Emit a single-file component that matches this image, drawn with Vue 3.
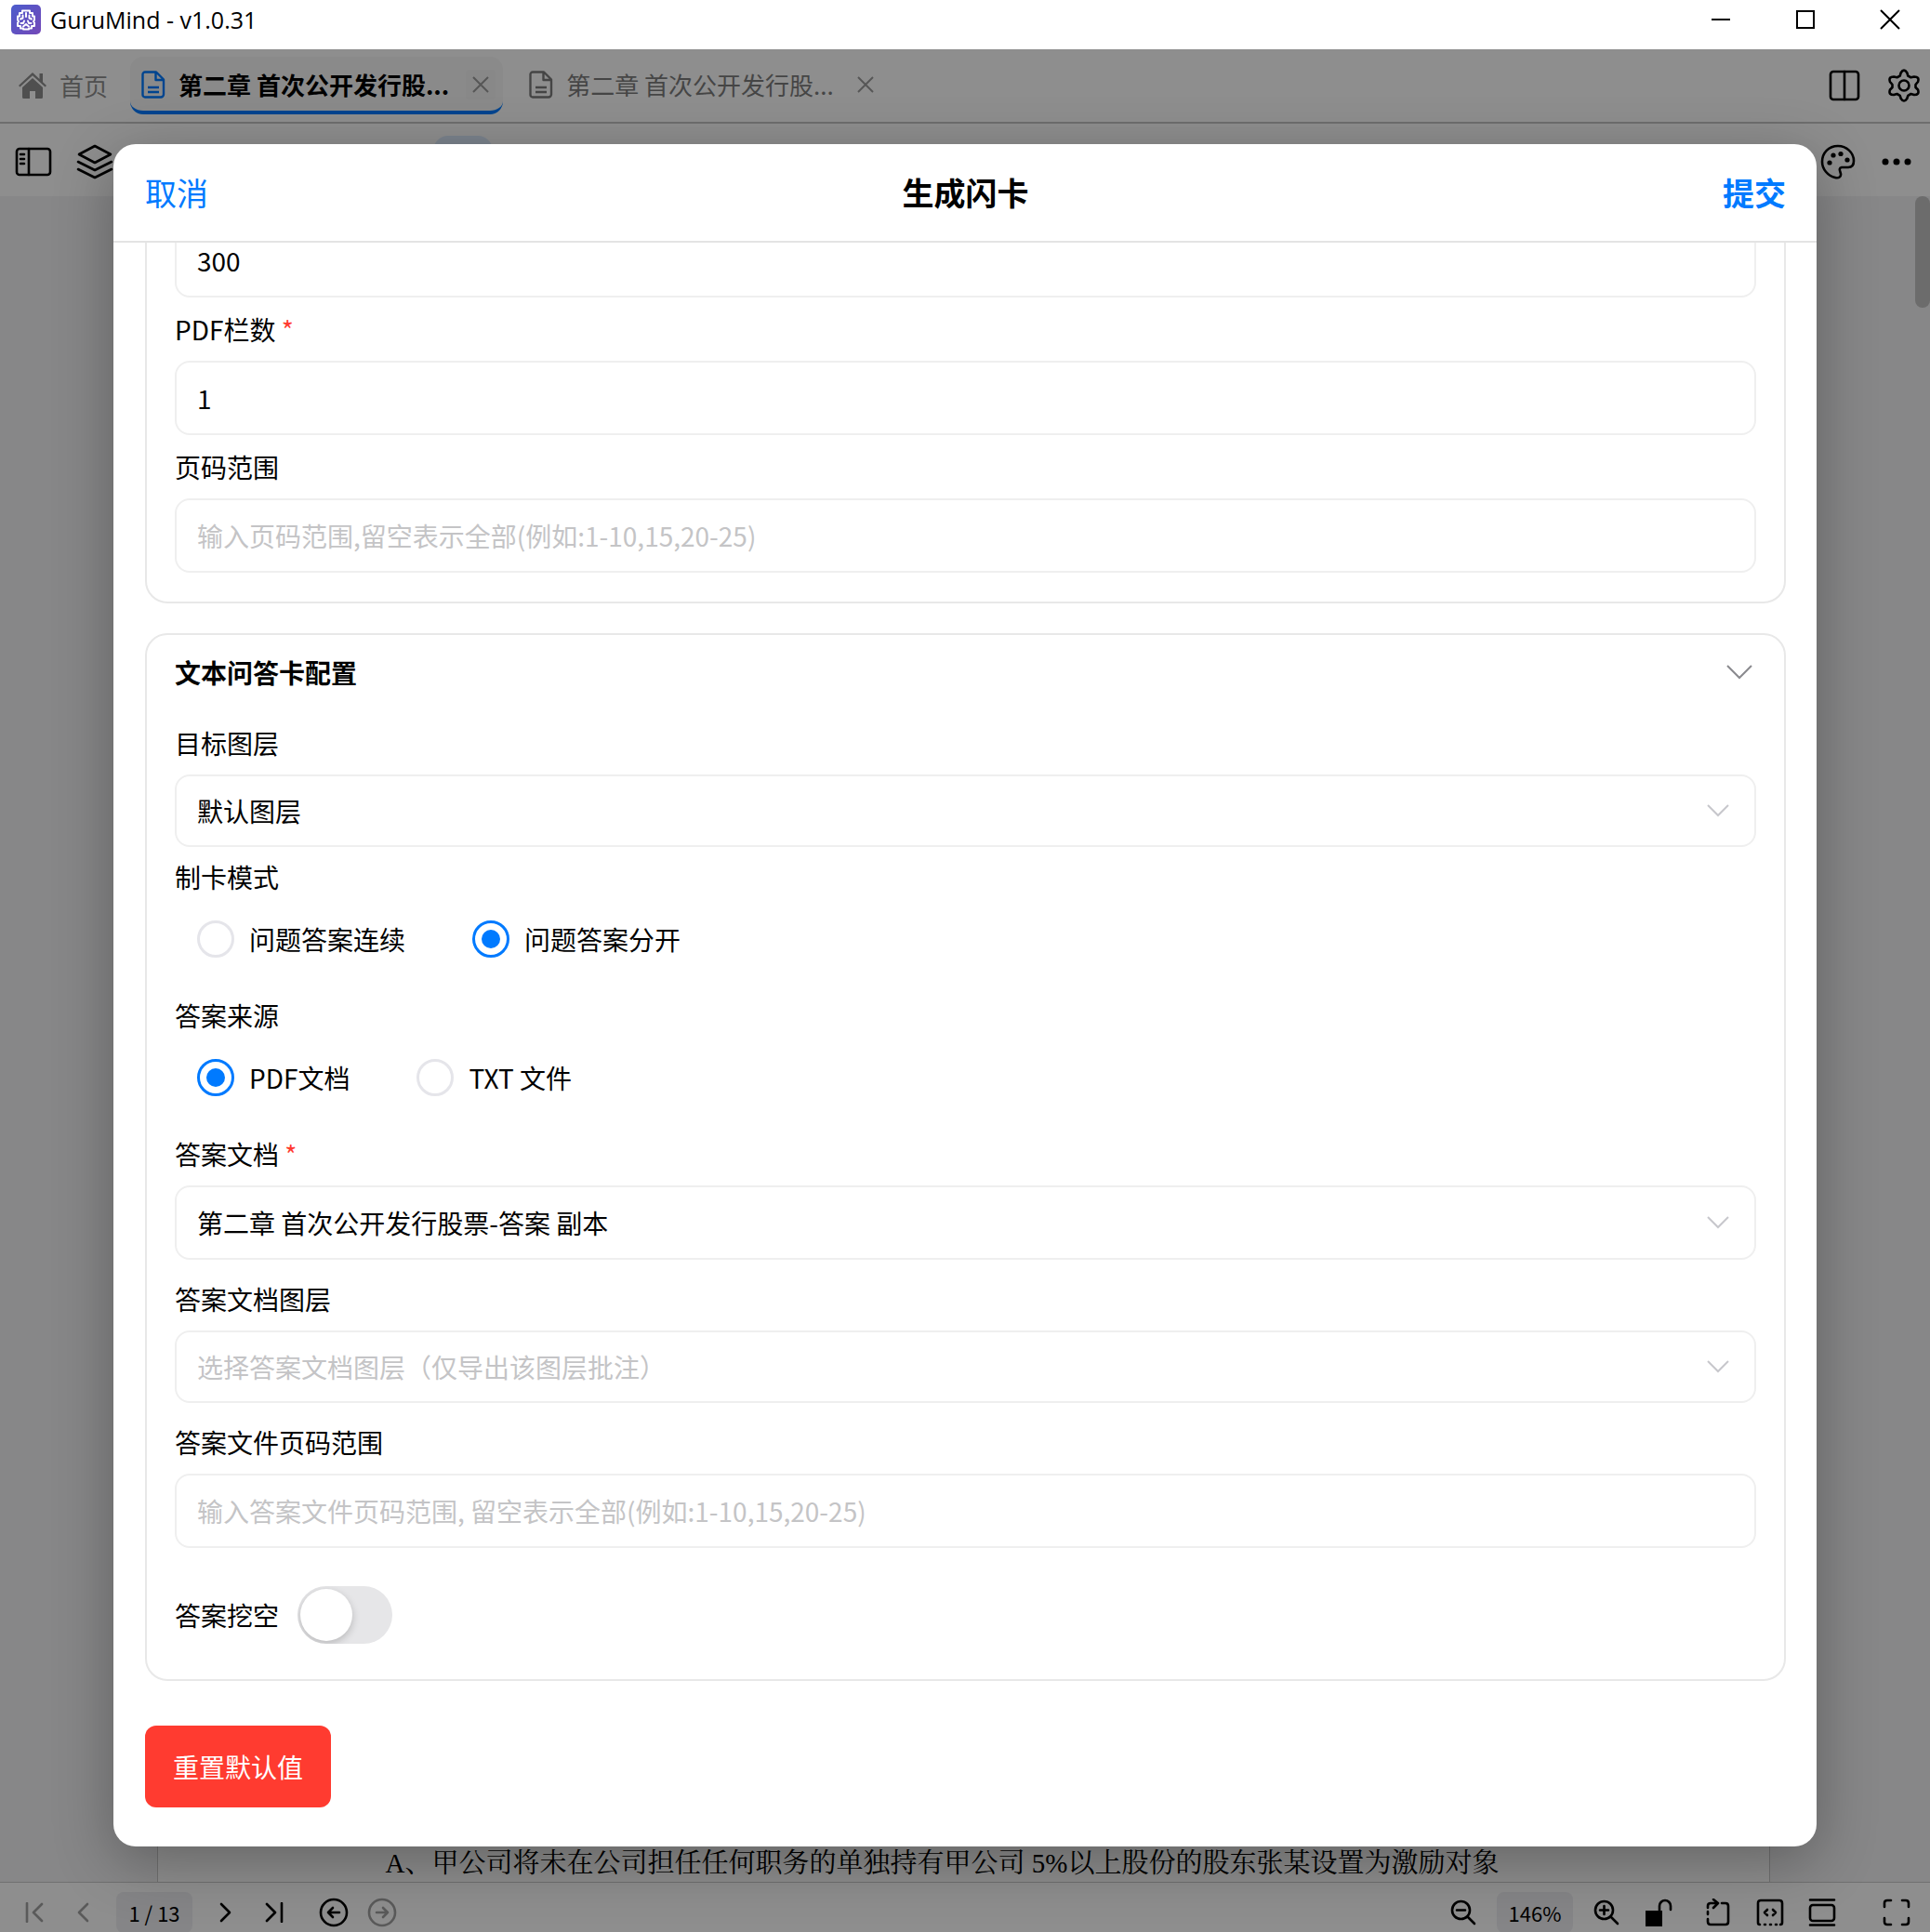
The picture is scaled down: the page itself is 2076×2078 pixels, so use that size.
<script setup>
import { ref } from 'vue'

const dpi = ref('300')
const columns = ref('1')
const pageRange = ref('')
const layer = ref('default')
const mode = ref('split')
const source = ref('pdf')
const answerDoc = ref('ch2')
const answerLayer = ref('')
const answerRange = ref('')
const cloze = ref(false)

const modes = [
  { value: 'continuous', label: '问题答案连续' },
  { value: 'split', label: '问题答案分开' },
]
const sources = [
  { value: 'pdf', label: 'PDF文档' },
  { value: 'txt', label: 'TXT 文件' },
]
</script>

<template>
  <div class="window">
    <header class="titlebar">
      <svg class="logo" width="32" height="32" viewBox="0 0 32 32" aria-hidden="true">
        <defs>
          <linearGradient id="lg" x1="0" y1="0" x2="1" y2="1">
            <stop offset="0" stop-color="#4b5ccc" />
            <stop offset="1" stop-color="#7448b8" />
          </linearGradient>
        </defs>
        <rect width="32" height="32" rx="5" fill="url(#lg)" />
        <g fill="none" stroke="#fff" stroke-width="2" stroke-linecap="round" stroke-linejoin="round">
          <path d="M12 6.500h8v2.500h3v3.500h2v4l-1 1.500 1 1.500v3.500h-3v2.500h-3v1h-6v-1h-3v-2.500H7v-3.500L8 18l-1-1.500v-4h2V9h3z" />
          <path d="M16 9v4M12.500 11.500v3l-2.500 1M19.500 11.500v3l2.500 1M10.500 20h2.500l1-2.500M21.500 20H19l-1-2.500M13 23.500l3-2.500 3 2.500" />
        </g>
      </svg>
      <span class="app-name">GuruMind - v1.0.31</span>
      <div class="window-buttons">
        <button type="button" aria-label="最小化">
          <svg width="22" height="22" viewBox="0 0 22 22"><path d="M1 11h20" class="win" /></svg>
        </button>
        <button type="button" aria-label="最大化">
          <svg width="22" height="22" viewBox="0 0 22 22"><path d="M2 2h18v18H2z" class="win" /></svg>
        </button>
        <button type="button" aria-label="关闭">
          <svg width="22" height="22" viewBox="0 0 22 22"><path d="M1 1l20 20M21 1L1 21" class="win" /></svg>
        </button>
      </div>
    </header>

    <div class="app">
      <nav class="tabs">
        <a class="home" href="#home">
          <svg width="30" height="30" viewBox="0 0 30 30" fill="currentColor">
            <path d="M15 1 0 15l1.500 1.500L15 4.200l13.500 12.300L30 15l-4-3.700V2h-3.500v6z" />
            <path d="M15 7 4 17v10.500A1.500 1.500 0 0 0 5.500 29H12v-8h6v8h6.500a1.500 1.500 0 0 0 1.500-1.500V17z" />
          </svg>
          <span>首页</span>
        </a>
        <div class="tab active">
          <svg class="file" width="26" height="30" viewBox="0 0 26 30">
            <path d="M4 1.500h12l8 8v16a3 3 0 0 1-3 3H4a2.500 2.500 0 0 1-2.500-2.500V4A2.500 2.500 0 0 1 4 1.500zM15.500 2v8H24M7 18h12M7 23h12" />
          </svg>
          <span class="tab-name">第二章 首次公开发行股...</span>
          <button class="tab-close" type="button" aria-label="关闭标签">
            <svg width="18" height="18" viewBox="0 0 18 18"><path d="M1 1l16 16M17 1L1 17" /></svg>
          </button>
        </div>
        <div class="tab">
          <svg class="file" width="26" height="30" viewBox="0 0 26 30">
            <path d="M4 1.500h12l8 8v16a3 3 0 0 1-3 3H4a2.500 2.500 0 0 1-2.500-2.500V4A2.500 2.500 0 0 1 4 1.500zM15.500 2v8H24M7 18h12M7 23h12" />
          </svg>
          <span class="tab-name">第二章 首次公开发行股...</span>
          <button class="tab-close" type="button" aria-label="关闭标签">
            <svg width="18" height="18" viewBox="0 0 18 18"><path d="M1 1l16 16M17 1L1 17" /></svg>
          </button>
        </div>
        <div class="right-tools">
          <button type="button" aria-label="分屏">
            <svg class="line" width="36" height="36" viewBox="0 0 36 36">
              <rect x="3" y="3" width="30" height="30" rx="3" />
              <path d="M18 3v30" />
            </svg>
          </button>
          <button type="button" aria-label="设置">
            <svg class="line" width="36" height="36" viewBox="0 0 36 36">
              <circle cx="18" cy="18" r="5.500" />
              <path d="M14.700 4.200Q18-1 21.300 4.200L22.300 7.500 25.500 9.300 29 8.500Q35 8.500 33 14L30.500 17v3L33 22.500Q35 28 29 28L25.500 27 22.300 28.800 21.300 32Q18 37 14.700 32L13.700 28.800 10.500 27 7 28Q1 28 3 22.500L5.500 20v-3L3 14Q1 8.500 7 8.500L10.500 9.300 13.700 7.500z" />
            </svg>
          </button>
        </div>
      </nav>

      <div class="toolbar">
        <button type="button" aria-label="侧边栏">
          <svg class="line" width="40" height="36" viewBox="0 0 40 36">
            <rect x="2" y="4" width="36" height="28" rx="3" />
            <path d="M15 4v28M6 10h4M6 15h4M6 20h4" />
          </svg>
        </button>
        <button type="button" aria-label="图层">
          <svg class="line" width="40" height="38" viewBox="0 0 40 38">
            <path d="M20 2 37 11 20 20 3 11zM2 19l18 9 18-9M2 27l18 9 18-9" />
          </svg>
        </button>
        <span class="active-tool"></span>
        <div class="right-tools">
          <button type="button" aria-label="主题">
            <svg class="line" width="38" height="38" viewBox="0 0 38 38">
              <path d="M19 2C9 2 2 9.500 2 19c0 8 6 15 14 17 4 1 6.500-1 6-4-.5-3-3-6 1-7h7c4 0 6-2.500 6-7C36 9 28 2 19 2z" />
              <g fill="#000" stroke="none">
                <circle cx="10" cy="20" r="2.600" /><circle cx="14" cy="12" r="2.600" />
                <circle cx="22" cy="10.500" r="2.600" /><circle cx="29" cy="17" r="2.600" />
              </g>
            </svg>
          </button>
          <button type="button" aria-label="更多">
            <svg width="32" height="8" viewBox="0 0 32 8">
              <circle cx="4" cy="4" r="3.500" /><circle cx="16" cy="4" r="3.500" /><circle cx="28" cy="4" r="3.500" />
            </svg>
          </button>
        </div>
      </div>

      <main class="viewer">
        <div class="page">
          <p>A、甲公司将未在公司担任任何职务的单独持有甲公司 5%以上股份的股东张某设置为激励对象</p>
        </div>
        <span class="scroll-thumb"></span>
      </main>

      <footer class="status">
        <button type="button" disabled aria-label="第一页">
          <svg class="line" width="20" height="22" viewBox="0 0 20 22"><path d="M2 1v20M18 2l-9 9 9 9" /></svg>
        </button>
        <button type="button" disabled aria-label="上一页">
          <svg class="line" width="20" height="22" viewBox="0 0 20 22"><path d="M15 2l-9 9 9 9" /></svg>
        </button>
        <span class="pill">1 / 13</span>
        <button type="button" aria-label="下一页">
          <svg class="line" width="20" height="22" viewBox="0 0 20 22"><path d="M5 2l9 9-9 9" /></svg>
        </button>
        <button type="button" aria-label="最后一页">
          <svg class="line" width="20" height="22" viewBox="0 0 20 22"><path d="M2 2l9 9-9 9M18 1v20" /></svg>
        </button>
        <button class="back" type="button" aria-label="后退">
          <svg class="line" width="32" height="32" viewBox="0 0 32 32"><circle cx="16" cy="16" r="14" /><path d="M22 16H10M15 11l-5 5 5 5" /></svg>
        </button>
        <button type="button" disabled aria-label="前进">
          <svg class="line" width="32" height="32" viewBox="0 0 32 32"><circle cx="16" cy="16" r="14" /><path d="M10 16h12M17 11l5 5-5 5" /></svg>
        </button>
        <div class="status-right">
          <button type="button" aria-label="缩小">
            <svg class="line" width="28" height="28" viewBox="0 0 28 28"><circle cx="11.500" cy="11.500" r="9.500" /><path d="M7 11.500h9M18.500 18.500l7.500 7.500" /></svg>
          </button>
          <span class="pill">146%</span>
          <button type="button" aria-label="放大">
            <svg class="line" width="28" height="28" viewBox="0 0 28 28"><circle cx="11.500" cy="11.500" r="9.500" /><path d="M7 11.500h9M11.500 7v9M18.500 18.500l7.500 7.500" /></svg>
          </button>
          <button type="button" aria-label="解锁">
            <svg class="line" width="30" height="30" viewBox="0 0 30 30"><path d="M1 13h18v17H1z" fill="#000" stroke="none" /><path d="M16 13V8a6 6 0 0 1 12 0v4" /></svg>
          </button>
          <button class="rotate" type="button" aria-label="旋转">
            <svg class="line" width="28" height="30" viewBox="0 0 28 30"><path d="M18 5h4q3 0 3 3v17q0 3-3 3H6q-3 0-3-3v-3M3 17v-3M3 10V8q0-3 3-3h6M9 1l5 4-5 5" /></svg>
          </button>
          <button type="button" aria-label="适合宽度">
            <svg class="line" width="30" height="30" viewBox="0 0 30 30"><path d="M4 28q-2 0-2-2V5q0-3 3-3h20q3 0 3 3v21q0 2-2 2M9 28h1M15 28h1M21 28h1M12 12l-3 3 3 3M18 12l3 3-3 3" /></svg>
          </button>
          <button type="button" aria-label="适合页面">
            <svg class="line" width="30" height="30" viewBox="0 0 30 30"><path d="M2 1.500h26M2 28.500h26" /><rect x="2" y="7" width="26" height="17" rx="3" /></svg>
          </button>
          <button class="full" type="button" aria-label="全屏">
            <svg class="line" width="30" height="30" viewBox="0 0 30 30"><path d="M2 9V5q0-3 3-3h4M21 2h4q3 0 3 3v4M28 21v4q0 3-3 3h-4M9 28H5q-3 0-3-3v-4" /></svg>
          </button>
        </div>
      </footer>

      <div class="overlay">
        <form class="modal" role="dialog" aria-labelledby="dialog-title" @submit.prevent>
          <div class="modal-head">
            <button class="cancel" type="button">取消</button>
            <h1 id="dialog-title">生成闪卡</h1>
            <button class="submit" type="submit">提交</button>
          </div>

          <div class="modal-body">
            <section class="card scrolled">
              <input v-model="dpi" class="control" type="text" aria-label="DPI" />
              <div class="field">
                <label for="columns">PDF栏数 <span class="req">*</span></label>
                <input id="columns" v-model="columns" class="control" type="text" />
              </div>
              <div class="field">
                <label for="range">页码范围</label>
                <input id="range" v-model="pageRange" class="control" type="text" placeholder="输入页码范围,留空表示全部(例如:1-10,15,20-25)" />
              </div>
            </section>

            <section class="card config">
              <div class="card-head">
                <h2>文本问答卡配置</h2>
                <button type="button" aria-label="折叠">
                  <svg width="28" height="16" viewBox="0 0 28 16"><path d="M1 1l13 13L27 1" /></svg>
                </button>
              </div>

              <div>
                <label for="layer">目标图层</label>
                <div class="select">
                  <select id="layer" v-model="layer" class="control short">
                    <option value="default">默认图层</option>
                  </select>
                  <svg width="24" height="14" viewBox="0 0 24 14"><path d="M1 1l11 11L23 1" /></svg>
                </div>
              </div>

              <fieldset class="after-select">
                <legend>制卡模式</legend>
                <div class="radios">
                  <label v-for="m in modes" :key="m.value">
                    <input v-model="mode" type="radio" name="mode" :value="m.value" />{{ m.label }}
                  </label>
                </div>
              </fieldset>

              <fieldset>
                <legend>答案来源</legend>
                <div class="radios">
                  <label v-for="s in sources" :key="s.value">
                    <input v-model="source" type="radio" name="source" :value="s.value" />{{ s.label }}
                  </label>
                </div>
              </fieldset>

              <div>
                <label for="answer-doc">答案文档 <span class="req">*</span></label>
                <div class="select">
                  <select id="answer-doc" v-model="answerDoc" class="control">
                    <option value="ch2">第二章 首次公开发行股票-答案 副本</option>
                  </select>
                  <svg width="24" height="14" viewBox="0 0 24 14"><path d="M1 1l11 11L23 1" /></svg>
                </div>
              </div>

              <div class="field wide">
                <label for="answer-layer">答案文档图层</label>
                <div class="select">
                  <select id="answer-layer" v-model="answerLayer" class="control short empty">
                    <option value="">选择答案文档图层（仅导出该图层批注）</option>
                  </select>
                  <svg width="24" height="14" viewBox="0 0 24 14"><path d="M1 1l11 11L23 1" /></svg>
                </div>
              </div>

              <div class="field wide">
                <label for="answer-range">答案文件页码范围</label>
                <input id="answer-range" v-model="answerRange" class="control" type="text" placeholder="输入答案文件页码范围, 留空表示全部(例如:1-10,15,20-25)" />
              </div>

              <div class="switch-row">
                <label for="cloze">答案挖空</label>
                <input id="cloze" v-model="cloze" class="switch" type="checkbox" role="switch" />
              </div>
            </section>

            <button class="reset" type="button">重置默认值</button>
          </div>
        </form>
      </div>
    </div>
  </div>
</template>

<style>
body {
  margin: 0;
}
</style>

<style scoped>
* {
  box-sizing: border-box;
}
.window {
  display: flex;
  flex-direction: column;
  min-height: 100vh;
  color: #000;
  font: 28px/40px "Noto Sans CJK SC", "Noto Sans", sans-serif;
}
button,
input,
select {
  margin: 0;
  padding: 0;
  border: 0;
  background: none;
  color: inherit;
  font: inherit;
}
h1,
h2,
p {
  margin: 0;
}
svg {
  display: block;
}

/* Title bar */
.titlebar {
  display: flex;
  align-items: center;
  height: 53px;
  padding: 0 0 11px 12px;
  background: #fff;
}
.app-name {
  margin-left: 10px;
  font: 25px/40px "Open Sans", "Noto Sans", sans-serif;
}
.window-buttons {
  display: flex;
  gap: 5px;
  margin-left: auto;
}
.window-buttons button {
  display: grid;
  place-items: center;
  width: 86px;
  height: 42px;
}
.win {
  fill: none;
  stroke: #000;
  stroke-width: 2;
}

/* Application shell under the dialog */
.app {
  position: relative;
  display: flex;
  flex: 1;
  flex-direction: column;
  background: #fdfdfd;
}
.line {
  fill: none;
  stroke: currentColor;
  stroke-width: 2.600;
  stroke-linecap: round;
  stroke-linejoin: round;
}
.tabs {
  display: flex;
  align-items: center;
  height: 80px;
  padding: 0 10px 0 20px;
  border-bottom: 2px solid #c4c4c4;
  font-size: 26px;
}
.home {
  display: flex;
  align-items: center;
  gap: 14px;
  margin-right: 24px;
  color: #8e8e8e;
  text-decoration: none;
}
.tab {
  display: flex;
  align-items: center;
  height: 62px;
  margin-right: 16px;
  padding: 2px 8px 0 12px;
  border-bottom: 4px solid transparent;
  border-radius: 14px;
  color: #7c7c7c;
}
.tab.active {
  border-color: #007aff;
  background: #f6f6f6;
  color: #000;
  font-weight: 700;
}
.file {
  margin-right: 14px;
  fill: none;
  stroke: currentColor;
  stroke-width: 2.400;
  stroke-linejoin: round;
}
.active .file {
  stroke: #007aff;
}
.tab-close {
  display: grid;
  place-items: center;
  width: 32px;
  height: 32px;
  margin-left: 18px;
}
.active .tab-close {
  border-radius: 4px;
  background: #f2f2f2;
}
.tab-close svg {
  fill: none;
  stroke: #9a9a9a;
  stroke-width: 2;
}
.right-tools {
  display: flex;
  gap: 28px;
  align-items: center;
  margin-left: auto;
}
.toolbar {
  display: flex;
  align-items: center;
  gap: 26px;
  height: 78px;
  padding: 4px 20px 0 16px;
}
.active-tool {
  width: 64px;
  height: 56px;
  margin-left: 318px;
  border-radius: 16px;
  background: #dbe9fb;
}
.viewer {
  position: relative;
  display: flex;
  flex: 1;
  padding: 0 172px 0 169px;
  background: #f0f0f3;
}
.page {
  display: flex;
  flex: 1;
  align-items: flex-end;
  justify-content: center;
  border: solid #c8c8c8;
  border-width: 0 1px;
  background: #fdfdfd;
}
.page p {
  padding-right: 46px;
  font: 29px/40px "Liberation Serif", "Noto Serif CJK SC", "Noto Sans CJK SC", serif;
  white-space: nowrap;
}
.scroll-thumb {
  position: absolute;
  top: 0;
  right: 0;
  width: 16px;
  height: 120px;
  border-radius: 8px;
  background: #c0c0c0;
}
.status {
  display: flex;
  align-items: center;
  gap: 4px;
  height: 54px;
  padding: 10px 12px 0 13px;
  border-top: 1px solid #c8c8c8;
  font-size: 22px;
}
.status button {
  display: grid;
  place-items: center;
  width: 48px;
  height: 40px;
}
.status button:disabled {
  color: #a0a0a0;
}
.pill {
  min-width: 82px;
  height: 44px;
  margin: 0 8px;
  border-radius: 8px;
  background: #ededf1;
  line-height: 44px;
  text-align: center;
}
.status .back {
  margin-left: 12px;
}
.status-right {
  display: flex;
  align-items: center;
  gap: 8px;
  margin-left: auto;
}
.status-right .pill {
  margin: 0 4px;
}
.status .rotate {
  margin-left: 8px;
}
.status .full {
  margin-left: 24px;
}

/* Dialog */
.overlay {
  position: absolute;
  inset: 0;
  display: flex;
  align-items: flex-start;
  padding: 102px 122px 0;
  background: rgba(0, 0, 0, 0.44);
}
.modal {
  flex: 1;
  overflow: hidden;
  border-radius: 24px;
  background: #fff;
  box-shadow: 0 16px 64px rgba(0, 0, 0, 0.3);
}
.modal-head {
  display: flex;
  align-items: center;
  justify-content: space-between;
  height: 106px;
  padding: 0 33px 0 34px;
  border-bottom: 2px solid #e4e4e4;
  font-size: 34px;
}
.modal-head h1 {
  font-size: 34px;
  font-weight: 700;
}
.cancel,
.submit {
  color: #007aff;
}
.submit {
  font-weight: 700;
}
.modal-body {
  overflow: hidden;
  padding: 0 33px 42px 34px;
}
.card {
  padding: 30px 30px 31px;
  border: 2px solid #e8e8e8;
  border-radius: 24px;
}
.scrolled {
  margin-top: -53px;
}
.config {
  margin: 32px 0 48px;
  padding: 20px 30px 38px;
}
.card-head {
  display: flex;
  align-items: center;
  justify-content: space-between;
  margin-bottom: 36px;
  padding-right: 4px;
}
.card-head h2 {
  font-size: 28px;
  font-weight: 700;
}
.card-head path,
.select path {
  fill: none;
  stroke: #8a8a8e;
  stroke-width: 2;
}
.field {
  margin-top: 14px;
}
.field.wide {
  margin-top: 22px;
}
.after-select {
  margin-top: 12px;
}
label,
legend {
  display: block;
  padding: 0;
}
fieldset {
  min-width: 0;
  margin: 0;
  padding: 0;
  border: 0;
}
fieldset.after-select {
  margin-top: 12px;
}
.req {
  color: #ff3b30;
}
.control {
  display: block;
  width: 100%;
  height: 80px;
  padding: 0 22px;
  border: 2px solid #efefef;
  border-radius: 16px;
  background: #fff;
  appearance: none;
}
.control.short {
  height: 78px;
}
.control.empty,
.control::placeholder {
  color: #c4c4c6;
  opacity: 1;
}
label + .control,
label + .select {
  margin-top: 14px;
}
.select {
  position: relative;
}
.select svg {
  position: absolute;
  top: 50%;
  right: 29px;
  margin-top: -7px;
  pointer-events: none;
}
.select path {
  stroke: #c7c7cc;
}
.radios {
  display: flex;
  gap: 72px;
  padding: 27px 24px 42px;
}
.radios label {
  display: flex;
  gap: 16px;
  align-items: center;
}
.radios input {
  display: grid;
  place-items: center;
  width: 40px;
  height: 40px;
  border: 3px solid #e5e5ea;
  border-radius: 50%;
  appearance: none;
}
.radios input:checked {
  border-color: #007aff;
}
.radios input:checked::before {
  width: 20px;
  height: 20px;
  border-radius: 50%;
  background: #007aff;
  content: "";
}
.switch-row {
  display: flex;
  align-items: center;
  gap: 20px;
  margin-top: 41px;
}
.switch {
  width: 102px;
  height: 62px;
  padding: 3px;
  overflow: hidden;
  border-radius: 31px;
  background: #e6e6e8;
  appearance: none;
}
.switch::before {
  display: block;
  width: 56px;
  height: 56px;
  border-radius: 50%;
  background: #fff;
  box-shadow: 0 3px 8px rgba(0, 0, 0, 0.2);
  content: "";
}
.switch:checked {
  background: #34c759;
}
.switch:checked::before {
  margin-left: 40px;
}
.reset {
  display: block;
  height: 88px;
  padding: 0 30px;
  border-radius: 12px;
  background: #ff3b30;
  color: #fff;
}
</style>
